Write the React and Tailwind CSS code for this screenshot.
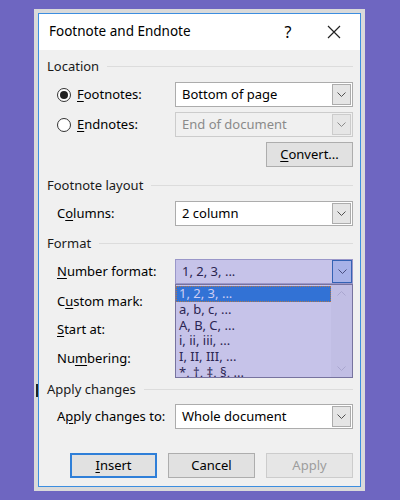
import React from 'react';

const Chevron = ({ up = false, className = '' }) => (
    <svg width="9" height="5" viewBox="0 0 9 5" className={className}>
        <polyline
            points={up ? '0.5,4.5 4.5,0.5 8.5,4.5' : '0.5,0.5 4.5,4.5 8.5,0.5'}
            fill="none"
            stroke="currentColor"
            strokeWidth="1"
        />
    </svg>
);

const U = ({ children }) => <span className="underline underline-offset-2">{children}</span>;

function Select({ value, disabled = false }) {
    return (
        <div
            className={`flex h-[25px] w-[178px] border ${
                disabled ? 'border-[#cccccc] bg-[#f0f0f0] text-[#8a8a8a]' : 'border-[#acacac] bg-white text-black'
            }`}
        >
            <div className="flex flex-1 items-center pl-[6px]">{value}</div>
            <div
                className={`m-px flex w-[19px] items-center justify-center border ${
                    disabled ? 'border-[#cccccc] bg-[#e6e6e6] text-[#8a8a8a]' : 'border-[#acacac] bg-[#e5e5e5] text-[#505050]'
                }`}
            >
                <Chevron />
            </div>
        </div>
    );
}

function Section({ title, gapClass = 'mt-[8px]', children }) {
    return (
        <div className={gapClass}>
            <div className="flex h-[16px] items-center gap-[8px]">
                <span className="text-[#1a1a1a]">{title}</span>
                <div className="h-px flex-1 bg-[#dcdcdc]" />
            </div>
            {children}
        </div>
    );
}

function Row({ label, className = '', children }) {
    return (
        <div className={`relative flex items-center pl-[10px] ${className}`}>
            <div className="w-[118px]">{label}</div>
            {children}
        </div>
    );
}

function Radio({ checked }) {
    return (
        <span className="mr-[6px] flex h-[14px] w-[14px] items-center justify-center rounded-full border border-[#333333] bg-white">
            {checked && <span className="h-[8px] w-[8px] rounded-full bg-[#222222]" />}
        </span>
    );
}

function Button({ children, primary = false, disabled = false }) {
    return (
        <div
            className={`flex h-[25px] w-[87px] items-center justify-center bg-[#e1e1e1] ${
                primary ? 'border-2 border-[#2f7fd8]' : 'border border-[#adadad]'
            } ${disabled ? 'border-[#cccccc] bg-[#e6e6e6] text-[#9d9d9d]' : 'text-black'}`}
        >
            {children}
        </div>
    );
}

const formats = ['a, b, c, ...', 'A, B, C, ...', 'i, ii, iii, ...', 'I, II, III, ...', '*, †, ‡, §, ...'];

export default function App() {
    return (
        <div className="relative h-[500px] w-[400px] bg-[#6e66c1] pl-[34px] pt-[9px] font-['Noto_Sans','DejaVu_Sans',sans-serif] text-[13px] leading-none text-black">
            <div className="w-[331px] bg-[#dadada] p-[4px]">
                <div className="border border-[#3c8ee0] bg-[#f0f0f0]">
                    {/* Title bar */}
                    <div className="flex h-[36px] items-center bg-white pl-[10px] pr-[3px]">
                        <span className="text-[13.5px]">Footnote and Endnote</span>
                        <span className="ml-auto flex w-[46px] justify-center text-[16px]">?</span>
                        <span className="flex w-[46px] justify-center">
                            <svg width="14" height="14" viewBox="0 0 14 14">
                                <path d="M1 1 L13 13 M13 1 L1 13" stroke="#222" strokeWidth="1.2" fill="none" />
                            </svg>
                        </span>
                    </div>

                    <div className="pb-[8px] pl-[8px] pr-[7px]">
                        <Section title="Location">
                            <Row className="mt-[8px]" label={<span className="flex items-center"><Radio checked /><span><U>F</U>ootnotes:</span></span>}>
                                <Select value="Bottom of page" />
                            </Row>
                            <Row className="mt-[5px]" label={<span className="flex items-center"><Radio /><span><U>E</U>ndnotes:</span></span>}>
                                <Select value="End of document" disabled />
                            </Row>
                            <div className="mt-[5px] flex justify-end">
                                <Button>
                                    <span><U>C</U>onvert...</span>
                                </Button>
                            </div>
                        </Section>

                        <Section title="Footnote layout" gapClass="mt-[10px]">
                            <Row className="mt-[8px]" label={<span>C<U>o</U>lumns:</span>}>
                                <Select value="2 column" />
                            </Row>
                        </Section>

                        <Section title="Format" gapClass="mt-[9px]">
                            <Row className="z-10 mt-[8px]" label={<span><U>N</U>umber format:</span>}>
                                <div className="flex h-[25px] w-[178px] border border-[#9a97c9] bg-[#c6c3e9] text-[#2a2550]">
                                    <div className="flex flex-1 items-center pl-[6px]">1, 2, 3, ...</div>
                                    <div className="flex w-[20px] items-center justify-center border border-[#3462b4] bg-[#a8b2e8] text-[#4a4f80]">
                                        <Chevron />
                                    </div>
                                </div>
                                {/* open dropdown list */}
                                <div className="absolute left-[128px] top-full flex h-[94px] w-[178px] border border-[#77739f] bg-[#c6c3e9]">
                                    <div className="flex-1 overflow-hidden pt-px text-[#2b2552]">
                                        <div className="flex h-[15.5px] items-center border border-dotted border-[#b0784a] bg-[#3272d5] pl-[2px] text-[#cfcdf3]">
                                            1, 2, 3, ...
                                        </div>
                                        {formats.map((f) => (
                                            <div key={f} className="flex h-[15.7px] items-center pl-[3px]">
                                                {f}
                                            </div>
                                        ))}
                                    </div>
                                    <div className="flex w-[21px] flex-col items-center justify-between bg-[#c1bee4] py-[6px] text-[#a9a6cf]">
                                        <Chevron up />
                                        <Chevron />
                                    </div>
                                </div>
                            </Row>
                            <Row className="h-[24px] mt-[5px]" label={<span>C<U>u</U>stom mark:</span>} />
                            <Row className="h-[24px] mt-[4px]" label={<span><U>S</U>tart at:</span>} />
                            <Row className="h-[24px] mt-[5px]" label={<span>Nu<U>m</U>bering:</span>} />
                        </Section>

                        <Section title="Apply changes" gapClass="mt-[11px]">
                            <Row className="mt-[7px]" label={<span>A<U>p</U>ply changes to:</span>}>
                                <Select value="Whole document" />
                            </Row>
                        </Section>

                        <div className="mt-[24px] flex justify-end gap-[11px]">
                            <Button primary>
                                <span><U>I</U>nsert</span>
                            </Button>
                            <Button>Cancel</Button>
                            <Button disabled>Apply</Button>
                        </div>
                    </div>
                </div>
            </div>
            {/* caret artifact on the dialog edge */}
            <div className="absolute left-[36px] top-[384px] h-[13px] w-[2px] bg-[#222222]" />
        </div>
    );
}
